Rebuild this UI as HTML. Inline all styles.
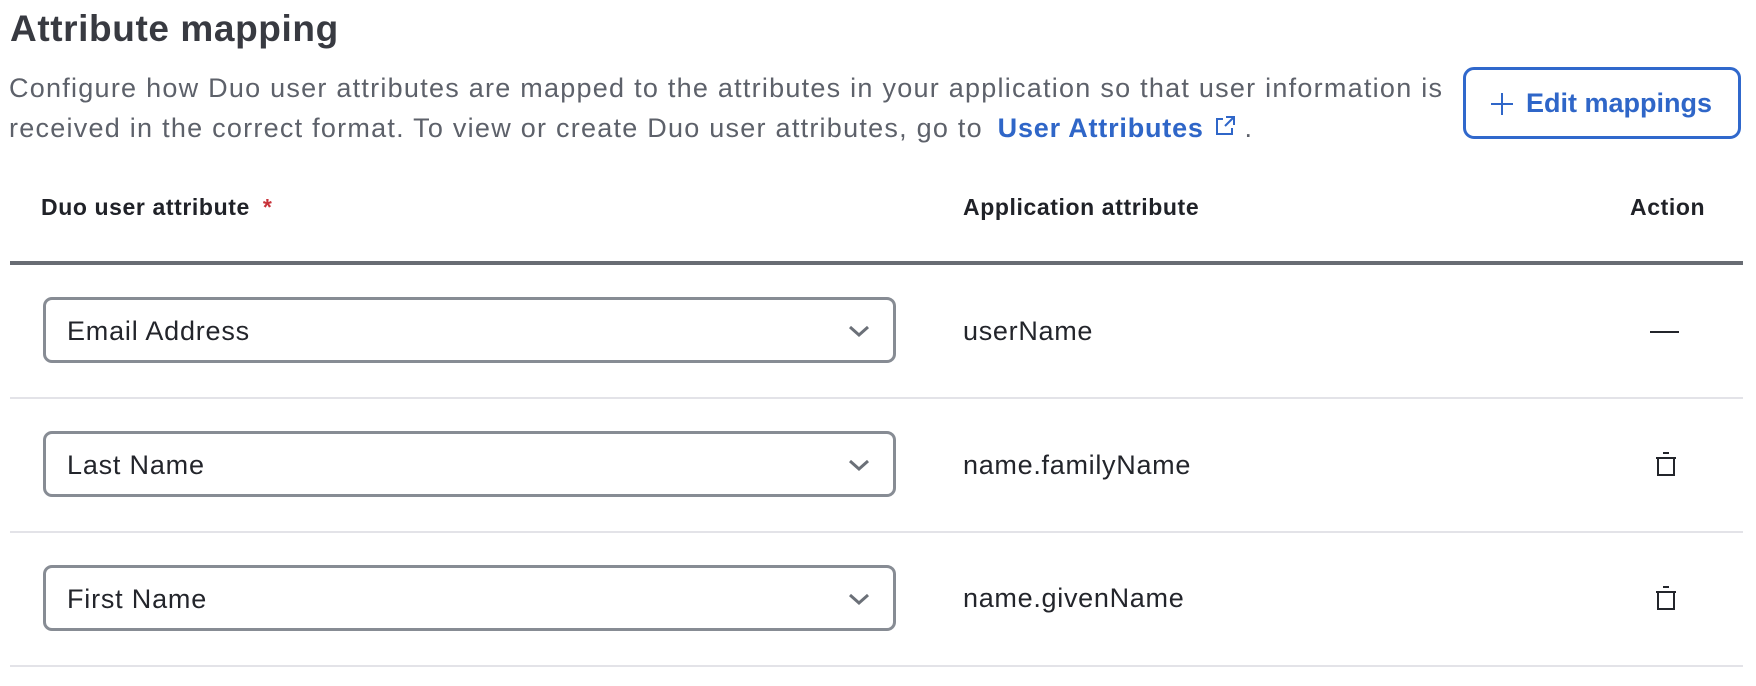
<!DOCTYPE html>
<html><head><meta charset="utf-8"><style>
*{margin:0;padding:0;box-sizing:border-box}
body{width:1756px;height:686px;background:#fff;font-family:"Liberation Sans",sans-serif;position:relative;overflow:hidden;color:#23252b}
.a{position:absolute;white-space:nowrap;line-height:1}
h1{position:absolute;left:10px;top:10px;font-size:37px;font-weight:bold;color:#383a41;line-height:1;white-space:nowrap;letter-spacing:0.6px}
.desc{font-size:27px;color:#5d616a;letter-spacing:1.25px}
.link{color:#2f66c8;font-weight:bold;letter-spacing:0.8px}
.btn{position:absolute;left:1463px;top:67px;width:278px;height:72px;border:3px solid #3068cc;border-radius:11px}
.btn span{position:absolute;left:60px;top:20px;font-size:27px;font-weight:bold;color:#2f66c8;line-height:1}
.hd{font-size:23px;font-weight:bold;color:#202228;letter-spacing:0.6px}
.sel{position:absolute;left:43px;width:853px;height:66px;border:3px solid #878c94;border-radius:9px}
.sel span{position:absolute;left:21px;top:18px;font-size:27px;color:#23252b;line-height:1;letter-spacing:0.8px}
.sel svg{position:absolute;left:801px;top:23px}
.txt{font-size:27px;color:#23252b;left:963px;letter-spacing:0.7px}
.line{position:absolute;left:10px;width:1733px;height:2px;background:#e3e3e8}
</style></head><body>
<h1>Attribute mapping</h1>
<div class="a desc" style="left:9px;top:75px">Configure how Duo user attributes are mapped to the attributes in your application so that user information is</div>
<div class="a desc" style="left:9px;top:115px">received in the correct format. To view or create Duo user attributes, go to <span class="link" style="margin-left:6px">User Attributes</span><svg width="22" height="22" viewBox="0 0 22 22" style="margin-left:10px;vertical-align:0"><path d="M9 4H3v15h15v-6" fill="none" stroke="#2f66c8" stroke-width="2"/><path d="M12 2h8v8M20 2l-9 9" fill="none" stroke="#2f66c8" stroke-width="2"/></svg> .</div>
<div class="btn"><svg width="24" height="24" viewBox="0 0 24 24" style="position:absolute;left:24px;top:22px"><path d="M12 1v22M1 12h22" stroke="#2f66c8" stroke-width="2"/></svg><span>Edit mappings</span></div>

<div class="a hd" style="left:41px;top:196px">Duo user attribute <span style="color:#c8333a;margin-left:6px">*</span></div>
<div class="a hd" style="left:963px;top:196px">Application attribute</div>
<div class="a hd" style="left:1630px;top:196px">Action</div>
<div style="position:absolute;left:10px;top:261px;width:1733px;height:4px;background:#686c73"></div>

<div class="sel" style="top:297px"><span>Email Address</span><svg width="24" height="16" viewBox="0 0 24 16"><path d="M3 4l9 8 9-8" fill="none" stroke="#6b7078" stroke-width="3"/></svg></div>
<div class="a txt" style="top:318px">userName</div>
<div style="position:absolute;left:1650px;top:331px;width:29px;height:2px;background:#23252b"></div>
<div class="line" style="top:397px"></div>

<div class="sel" style="top:431px"><span>Last Name</span><svg width="24" height="16" viewBox="0 0 24 16"><path d="M3 4l9 8 9-8" fill="none" stroke="#6b7078" stroke-width="3"/></svg></div>
<div class="a txt" style="top:452px">name.familyName</div>
<svg style="position:absolute;left:1654px;top:451px" width="24" height="26" viewBox="0 0 24 26"><path d="M9 2h6M2 7h20M4 7v17h16V7" fill="none" stroke="#23252b" stroke-width="2"/></svg>
<div class="line" style="top:531px"></div>

<div class="sel" style="top:565px"><span>First Name</span><svg width="24" height="16" viewBox="0 0 24 16"><path d="M3 4l9 8 9-8" fill="none" stroke="#6b7078" stroke-width="3"/></svg></div>
<div class="a txt" style="top:585px">name.givenName</div>
<svg style="position:absolute;left:1654px;top:585px" width="24" height="26" viewBox="0 0 24 26"><path d="M9 2h6M2 7h20M4 7v17h16V7" fill="none" stroke="#23252b" stroke-width="2"/></svg>
<div class="line" style="top:665px"></div>
</body></html>
